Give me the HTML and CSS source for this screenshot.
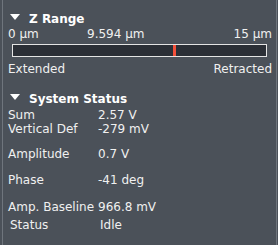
FILE: index.html
```html
<!DOCTYPE html>
<html lang="en">
<head>
    <meta charset="UTF-8">
    <meta name="viewport" content="width=device-width, initial-scale=1.0">
    <title>Z Range</title>
    <link rel="stylesheet" href="styles.css">
</head>
<body>
    <div class="panel">
        <div class="section-head">
            <svg class="caret" width="10" height="6" viewBox="0 0 10 6"><polygon points="0,0 10,0 5,6" fill="#ffffff"/></svg>
            <span>Z Range</span>
        </div>
        <div class="scale">
            <span class="scale-min">0 µm</span>
            <span class="scale-cur">9.594 µm</span>
            <span class="scale-max">15 µm</span>
        </div>
        <div class="zbar">
            <div class="zbar-mark" style="left: 63.3%"></div>
        </div>
        <div class="ends">
            <span>Extended</span>
            <span>Retracted</span>
        </div>

        <div class="section-head status-head">
            <svg class="caret" width="10" height="6" viewBox="0 0 10 6"><polygon points="0,0 10,0 5,6" fill="#ffffff"/></svg>
            <span>System Status</span>
        </div>
        <div class="rows">
            <div class="row h14"><span class="label">Sum</span><span class="value">2.57 V</span></div>
            <div class="row h25"><span class="label">Vertical Def</span><span class="value">-279 mV</span></div>
            <div class="row h26"><span class="label">Amplitude</span><span class="value">0.7 V</span></div>
            <div class="row h27"><span class="label">Phase</span><span class="value">-41 deg</span></div>
            <div class="row h18"><span class="label">Amp. Baseline</span><span class="value">966.8 mV</span></div>
            <div class="row h14 indent"><span class="label">Status</span><span class="value">Idle</span></div>
        </div>
    </div>
</body>
</html>
```

FILE: styles.css
```css
body {
    margin: 0;
    background-color: #4b5159;
    color: #f0f0f0;
    font-family: "DejaVu Sans", Verdana, sans-serif;
    font-size: 12px;
    line-height: 14px;
    overflow: hidden;
}
.panel {
    margin-left: 2px;
    width: 275px;
    height: 245px;
    box-sizing: border-box;
    padding: 11px 4px 0 5px;
    border-left: 1px solid #6f757d;
    border-right: 1px solid #6f757d;
}

/* section titles */
.section-head {
    display: flex;
    align-items: flex-start;
    font-weight: bold;
    line-height: 16px;
    color: #ffffff;
}
.section-head .caret {
    margin: 3px 9px 0 2px;
    flex: none;
}
.status-head {
    margin-top: 15px;
}

/* z range */
.scale {
    display: flex;
}
.scale-min {
    width: 79px;
}
.scale-max {
    margin-left: auto;
}
.zbar {
    position: relative;
    height: 13px;
    box-sizing: border-box;
    margin: 3px 5px 0 4px;
    background: #2b2f36;
    border: 1px solid #e4e4e4;
}
.zbar-mark {
    position: absolute;
    top: 0;
    bottom: 0;
    width: 3px;
    background: #f4503a;
}
.ends {
    display: flex;
    justify-content: space-between;
    margin-top: 5px;
}

/* status rows */
.rows {
    margin-top: 1px;
}
.row {
    display: flex;
}
.row .label {
    width: 90px;
    flex: none;
}
.row.indent {
    padding-left: 2px;
}
.h14 { height: 14px; }
.h18 { height: 18px; }
.h25 { height: 25px; }
.h26 { height: 26px; }
.h27 { height: 27px; }
```
